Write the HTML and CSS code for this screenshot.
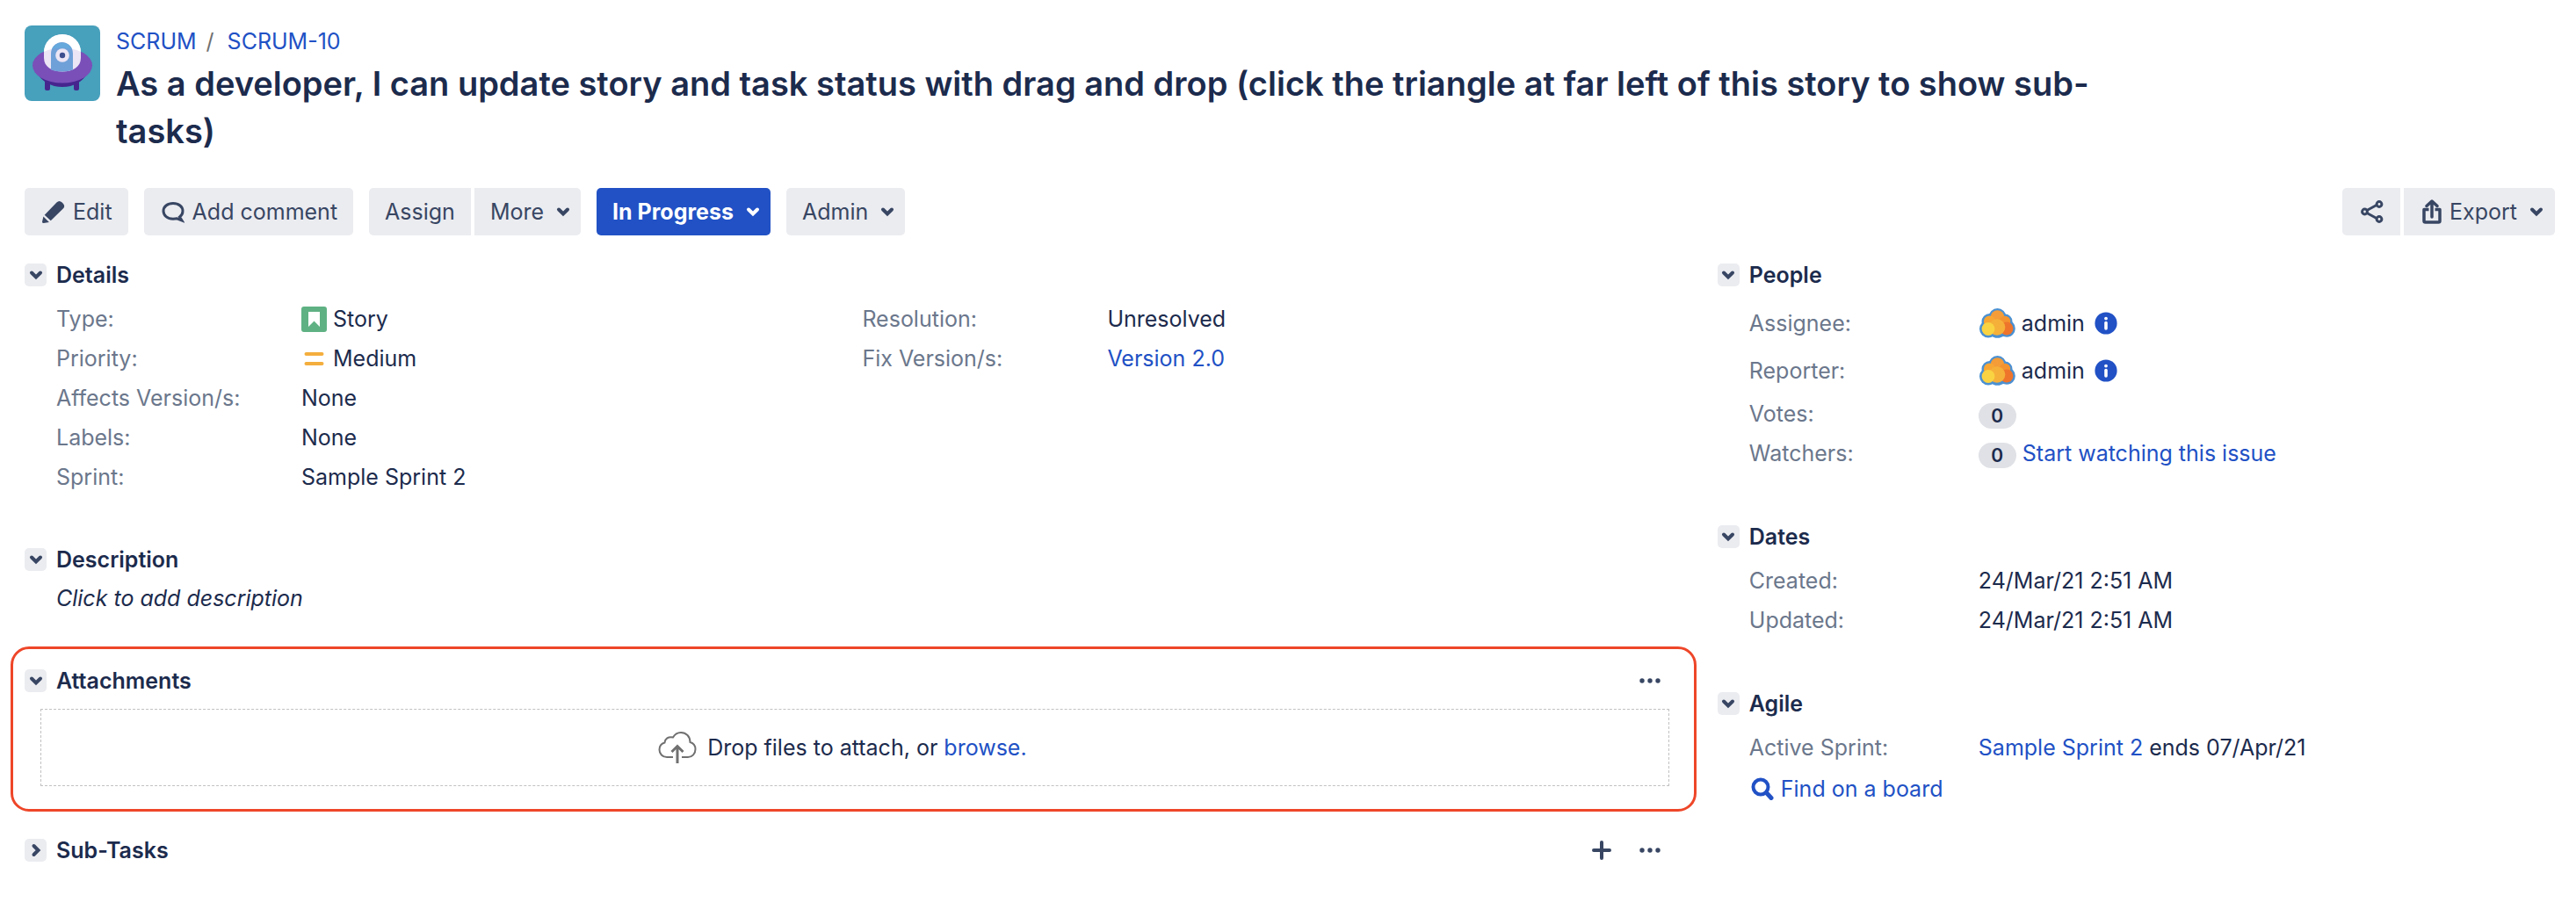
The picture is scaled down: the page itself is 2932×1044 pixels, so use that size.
FILE: index.html
```html
<!DOCTYPE html>
<html lang="en">
<head>
    <meta charset="UTF-8">
    <meta name="viewport" content="width=device-width, initial-scale=1.0">
    <title>SCRUM-10</title>
    <link rel="stylesheet" href="styles.css">
</head>
<body>
    <!-- Shared icons -->
    <svg class="sprite" aria-hidden="true">
        <symbol id="chevron" viewBox="0 0 16 16">
            <path d="M3 5.5l5 5 5-5" fill="none" stroke="currentColor" stroke-width="4" stroke-linecap="round" stroke-linejoin="miter"/>
        </symbol>
        <symbol id="dots" viewBox="0 0 24 6">
            <circle cx="3" cy="3" r="2.7"/><circle cx="12" cy="3" r="2.7"/><circle cx="21" cy="3" r="2.7"/>
        </symbol>
        <symbol id="info" viewBox="0 0 26 26">
            <circle cx="13" cy="13" r="12.6" fill="#2151c5"/>
            <circle cx="13" cy="7.6" r="1.9" fill="#fff"/>
            <path d="M13 12.6v6.4" stroke="#fff" stroke-width="3.6" stroke-linecap="round"/>
        </symbol>
        <symbol id="cloud" viewBox="0 0 42 36">
            <g fill="#4a90d2">
                <circle cx="21.500" cy="11" r="10"/>
                <circle cx="12.500" cy="16" r="9"/>
                <circle cx="30" cy="16" r="8.500"/>
                <circle cx="32" cy="24" r="9.800"/>
                <circle cx="21.500" cy="24" r="10.800"/>
                <circle cx="11" cy="24.500" r="10"/>
            </g>
            <circle cx="21.500" cy="11" r="7.800" fill="#f39c38"/>
            <circle cx="12.500" cy="16" r="6.600" fill="#f7a634"/>
            <circle cx="30" cy="16" r="6.200" fill="#f3932f"/>
            <circle cx="32" cy="24" r="7.400" fill="#ee742b"/>
            <circle cx="21" cy="22.500" r="9.300" fill="#f5b03a"/>
            <circle cx="11" cy="24.500" r="7.400" fill="#f9d342"/>
        </symbol>
    </svg>

    <header class="issue-header">
        <svg class="project-avatar" viewBox="0 0 86 86" aria-hidden="true">
            <rect width="86" height="86" rx="8" fill="#47a0bc"/>
            <path d="M23 62h6v10q0 2-2 2h-2q-2 0-2-2zM56 62h6v10q0 2-2 2h-2q-2 0-2-2z" fill="#46258e"/>
            <path d="M14 54c6 10 16 16 29 16s23-6 29-16z" fill="#46258e"/>
            <ellipse cx="43" cy="45.500" rx="34" ry="20" fill="#7a4fb8"/>
            <path d="M22 31a21 21 0 0142 0v6c0 10-9 15.500-21 15.500S22 47 22 37z" fill="#ebe5f5"/>
            <path d="M22 30a21 20 0 0142 0c-6-3-13-4.500-21-4.500S28 27 22 30z" fill="#fff"/>
            <path d="M30 32a12.500 13 0 0125 0v18.500c-7 2.500-18 2.500-25 0z" fill="#6fa0d8"/>
            <path d="M31 27a12.500 12 0 0123 0c-7-2-16-2-23 0z" fill="#66a9dc"/>
            <circle cx="43" cy="34" r="7.800" fill="#ebe5f5"/>
            <circle cx="43" cy="34" r="3.200" fill="#3d4e8f"/>
        </svg>
        <div class="issue-heading">
            <nav class="breadcrumbs">
                <a href="#">SCRUM</a>
                <span class="separator">/</span>
                <a href="#">SCRUM-10</a>
            </nav>
            <h1>As a developer, I can update story and task status with drag and drop (click the triangle at far left of this story to show sub-tasks)</h1>
        </div>
    </header>

    <div class="toolbar">
        <button type="button" class="btn">
            <svg class="icon" viewBox="0 0 24 24" aria-hidden="true">
                <path d="M2.500 15.500L15.200 2.300Q18 -.5 20.900 2.300L22 3.500Q24.500 6.300 22 8.800L9 21.500zM1.300 17l6 6L1.500 24Q0 24 0 22.500z" fill="currentColor"/>
            </svg>
            Edit
        </button>
        <button type="button" class="btn">
            <svg class="icon" viewBox="0 0 26 24" aria-hidden="true">
                <path d="M13 2.500c6.500 0 11 3.800 11 8.800 0 3-1.400 5.200-3.500 6.700l2.500 4-5.500-2.200c-1.400.3-2.900.4-4.500.4C6.500 20.200 2 16.300 2 11.300s4.500-8.800 11-8.800z" fill="none" stroke="currentColor" stroke-width="3"/>
            </svg>
            Add comment
        </button>
        <div class="btn-group">
            <button type="button" class="btn">Assign</button>
            <button type="button" class="btn">More <svg class="chevron"><use href="#chevron"/></svg></button>
        </div>
        <button type="button" class="btn btn-primary">In Progress <svg class="chevron"><use href="#chevron"/></svg></button>
        <button type="button" class="btn">Admin <svg class="chevron"><use href="#chevron"/></svg></button>
        <div class="btn-group toolbar-right">
            <button type="button" class="btn" aria-label="Share">
                <svg class="icon" viewBox="0 0 26 26" fill="none" stroke="currentColor" stroke-width="3" aria-hidden="true">
                    <path d="M7 11.500l11-6M7 14.500l11 6"/>
                    <circle cx="4.500" cy="13" r="2.900"/><circle cx="21" cy="4.500" r="2.900"/><circle cx="21" cy="21.500" r="2.900"/>
                </svg>
            </button>
            <button type="button" class="btn">
                <svg class="icon icon-tall" viewBox="0 0 22 28" fill="none" stroke="currentColor" stroke-width="3.500" stroke-linejoin="round" aria-hidden="true">
                    <path d="M7.500 11.500H2V24.500q0 1.500 1.500 1.500h15q1.500 0 1.500-1.500V11.500H14.500"/>
                    <path d="M11 20V3M5 7.500L11 2l6 5.500" stroke-linecap="round"/>
                </svg>
                Export <svg class="chevron"><use href="#chevron"/></svg>
            </button>
        </div>
    </div>

    <div class="issue-body">
        <main>
            <section class="module">
                <div class="module-header">
                    <button type="button" class="toggle" aria-label="Toggle details"><svg><use href="#chevron"/></svg></button>
                    <h2>Details</h2>
                </div>
                <div class="details">
                    <dl class="fields">
                        <dt>Type:</dt>
                        <dd>
                            <svg class="type-icon" viewBox="0 0 29 29" aria-hidden="true"><rect width="29" height="29" rx="3" fill="#5fb183"/><path d="M8 6h13v17l-6.500-6.500L8 23z" fill="#fff"/></svg>
                            Story
                        </dd>
                        <dt>Priority:</dt>
                        <dd>
                            <svg class="type-icon" viewBox="0 0 29 29" aria-hidden="true"><path d="M5.500 9h18M5.500 20h18" stroke="#f4ae3d" stroke-width="4" stroke-linecap="round"/></svg>
                            Medium
                        </dd>
                        <dt>Affects Version/s:</dt>
                        <dd>None</dd>
                        <dt>Labels:</dt>
                        <dd>None</dd>
                        <dt>Sprint:</dt>
                        <dd>Sample Sprint 2</dd>
                    </dl>
                    <dl class="fields">
                        <dt>Resolution:</dt>
                        <dd>Unresolved</dd>
                        <dt>Fix Version/s:</dt>
                        <dd><a href="#">Version 2.0</a></dd>
                    </dl>
                </div>
            </section>

            <section class="module module-description">
                <div class="module-header">
                    <button type="button" class="toggle" aria-label="Toggle description"><svg><use href="#chevron"/></svg></button>
                    <h2>Description</h2>
                </div>
                <p class="description">Click to add description</p>
            </section>

            <section class="attachments">
                <div class="module-header">
                    <button type="button" class="toggle" aria-label="Toggle attachments"><svg><use href="#chevron"/></svg></button>
                    <h2>Attachments</h2>
                    <div class="module-actions">
                        <button type="button" class="action" aria-label="Attachment options"><svg class="dots"><use href="#dots"/></svg></button>
                    </div>
                </div>
                <div class="dropzone">
                    <svg class="upload" viewBox="0 0 44 38" fill="none" stroke="#707070" stroke-width="2" aria-hidden="true">
                        <path d="M17 30H10C5 30 1.500 26 1.500 21.500c0-4 2.500-7 6-8C8 9 11.500 6.500 17 7.500 19 4 22 2 26 2c6 0 10.500 4.500 10.500 11 3.500 1 6 4 6 8 0 5-3.500 9-8.500 9h-7"/>
                        <path d="M22 37V18M15.500 24l6.500-6.500 6.500 6.500" stroke-width="3"/>
                    </svg>
                    <span>Drop files to attach, or <a href="#">browse.</a></span>
                </div>
            </section>

            <section>
                <div class="module-header">
                    <button type="button" class="toggle toggle-closed" aria-label="Toggle sub-tasks"><svg><use href="#chevron"/></svg></button>
                    <h2>Sub-Tasks</h2>
                    <div class="module-actions">
                        <button type="button" class="action" aria-label="Create sub-task">
                            <svg class="plus" viewBox="0 0 22 22"><path d="M11 2v18M2 11h18" stroke="currentColor" stroke-width="4" stroke-linecap="round"/></svg>
                        </button>
                        <button type="button" class="action" aria-label="Sub-task options"><svg class="dots"><use href="#dots"/></svg></button>
                    </div>
                </div>
            </section>
        </main>

        <aside>
            <section class="module">
                <div class="module-header">
                    <button type="button" class="toggle" aria-label="Toggle people"><svg><use href="#chevron"/></svg></button>
                    <h2>People</h2>
                </div>
                <dl class="fields fields-side">
                    <dt class="person">Assignee:</dt>
                    <dd class="person"><svg class="user-avatar"><use href="#cloud"/></svg> admin <svg class="info"><use href="#info"/></svg></dd>
                    <dt class="person">Reporter:</dt>
                    <dd class="person"><svg class="user-avatar"><use href="#cloud"/></svg> admin <svg class="info"><use href="#info"/></svg></dd>
                    <dt>Votes:</dt>
                    <dd><span class="badge">0</span></dd>
                    <dt>Watchers:</dt>
                    <dd><span class="badge">0</span> <a href="#">Start watching this issue</a></dd>
                </dl>
            </section>

            <section class="module">
                <div class="module-header">
                    <button type="button" class="toggle" aria-label="Toggle dates"><svg><use href="#chevron"/></svg></button>
                    <h2>Dates</h2>
                </div>
                <dl class="fields fields-side">
                    <dt>Created:</dt>
                    <dd>24/Mar/21 2:51 AM</dd>
                    <dt>Updated:</dt>
                    <dd>24/Mar/21 2:51 AM</dd>
                </dl>
            </section>

            <section class="module">
                <div class="module-header">
                    <button type="button" class="toggle" aria-label="Toggle agile"><svg><use href="#chevron"/></svg></button>
                    <h2>Agile</h2>
                </div>
                <dl class="fields fields-side">
                    <dt>Active Sprint:</dt>
                    <dd><span><a href="#">Sample Sprint 2</a> ends 07/Apr/21</span></dd>
                </dl>
                <a href="#" class="find-board">
                    <svg class="search" viewBox="0 0 26 26" fill="none" stroke="currentColor" stroke-width="4" aria-hidden="true"><circle cx="11" cy="11" r="8.500"/><path d="M17.500 17.500l5.500 6" stroke-width="5" stroke-linecap="round"/></svg>
                    Find on a board
                </a>
            </section>
        </aside>
    </div>
</body>
</html>
```
FILE: styles.css
```css
* {
    box-sizing: border-box;
}

body {
    margin: 0;
    padding: 28px 24px 24px 28px;
    background-color: #fff;
    color: #1c2b4d;
    font-family: Inter, "Liberation Sans", sans-serif;
    font-size: 25px;
    line-height: 45px;
}

a {
    color: #2151c5;
    text-decoration: none;
}

a:hover {
    text-decoration: underline;
}

h1, h2, p, dl, dd {
    margin: 0;
}

button {
    border: none;
    font: inherit;
    color: #384663;
    cursor: pointer;
}

svg {
    flex: none;
}

.sprite {
    display: none;
}

/* Header */
.issue-header {
    display: flex;
    gap: 18px;
}

.project-avatar {
    width: 86px;
    height: 86px;
    margin-top: 1px;
}

.issue-heading {
    max-width: 80%;
}

.breadcrumbs {
    display: flex;
    gap: 11px;
    margin-bottom: 2px;
    line-height: 38px;
}

.separator {
    margin-right: 4px;
    color: #707070;
}

h1 {
    font-size: 38px;
    font-weight: 600;
    line-height: 54px;
}

/* Toolbar */
.toolbar {
    display: flex;
    gap: 18px;
    margin-top: 38px;
}

.btn {
    display: flex;
    align-items: center;
    gap: 9px;
    height: 54px;
    padding: 0 18px;
    border-radius: 5px;
    background-color: #ebecf0;
}

.btn:hover {
    background-color: #dfe1e6;
}

.btn-primary {
    background-color: #2151c5;
    color: #fff;
    font-weight: 700;
}

.btn-primary:hover {
    background-color: #1b46ad;
}

.btn-group {
    display: flex;
    gap: 4px;
}

.btn-group .btn:first-child {
    border-radius: 5px 0 0 5px;
}

.btn-group .btn:last-child {
    border-radius: 0 5px 5px 0;
}

.toolbar-right {
    margin-left: auto;
}

.toolbar-right .btn {
    padding: 0 19px;
}

.icon {
    width: 26px;
    height: 26px;
    margin-left: 2px;
}

.icon-tall {
    width: 22px;
    height: 28px;
}

.chevron {
    width: 16px;
    height: 16px;
    margin: 0 -6px 0 5px;
}

/* Body */
.issue-body {
    display: grid;
    grid-template-columns: 66% 1fr;
    column-gap: 26px;
    margin-top: 32px;
}

.module {
    margin-bottom: 58px;
}

aside .module {
    margin-bottom: 59px;
}

.module-description {
    margin-bottom: 32px;
}

.module-header {
    display: flex;
    align-items: center;
    height: 26px;
}

h2 {
    font-size: 25px;
    font-weight: 600;
    line-height: 26px;
}

.toggle {
    display: flex;
    align-items: center;
    justify-content: center;
    width: 25px;
    height: 26px;
    margin-right: 11px;
    padding: 0;
    border-radius: 5px;
    background-color: #ebecf0;
}

.toggle svg {
    width: 16px;
    height: 16px;
}

.toggle-closed svg {
    transform: rotate(-90deg);
}

.module-actions {
    display: flex;
    gap: 32px;
    margin-left: auto;
    padding-right: 39px;
}

.action {
    display: flex;
    align-items: center;
    padding: 0;
    background: none;
}

.dots {
    width: 24px;
    height: 6px;
    fill: #384663;
}

.plus {
    width: 22px;
    height: 22px;
}

.details {
    display: grid;
    grid-template-columns: 1fr 1fr;
    padding-right: 30px;
    padding-left: 36px;
}

.fields {
    display: grid;
    grid-template-columns: 279px 1fr;
    align-content: start;
    margin-top: 15px;
}

.fields-side {
    grid-template-columns: 261px 1fr;
    padding-left: 36px;
}

dt {
    color: #6b778c;
}

dd {
    display: flex;
    align-items: center;
    gap: 7px;
}

.person {
    line-height: 54px;
}

.type-icon {
    width: 29px;
    height: 29px;
}

.user-avatar {
    width: 42px;
    height: 36px;
}

.info {
    width: 26px;
    height: 26px;
    margin-left: 4px;
}

.badge {
    width: 43px;
    margin-top: 4px;
    border-radius: 15px;
    background-color: #dfe1e6;
    font-size: 21px;
    font-weight: 600;
    line-height: 29px;
    text-align: center;
}

.description {
    margin-top: 9px;
    padding-left: 36px;
    font-style: italic;
}

.attachments {
    margin: 0 -2px 31px -16px;
    padding: 23px 28px 26px 13px;
    border: 3px solid #ee4629;
    border-radius: 21px;
}

.attachments .module-actions {
    padding-right: 10px;
}

.dropzone {
    display: flex;
    align-items: center;
    justify-content: center;
    gap: 12px;
    height: 88px;
    margin: 19px 0 0 18px;
    padding-right: 28px;
    border: 1px dashed #c1c1c1;
}

.upload {
    width: 44px;
    height: 38px;
}

.find-board {
    display: flex;
    align-items: center;
    gap: 8px;
    padding-left: 38px;
    line-height: 48px;
}

.search {
    width: 26px;
    height: 26px;
}
```
